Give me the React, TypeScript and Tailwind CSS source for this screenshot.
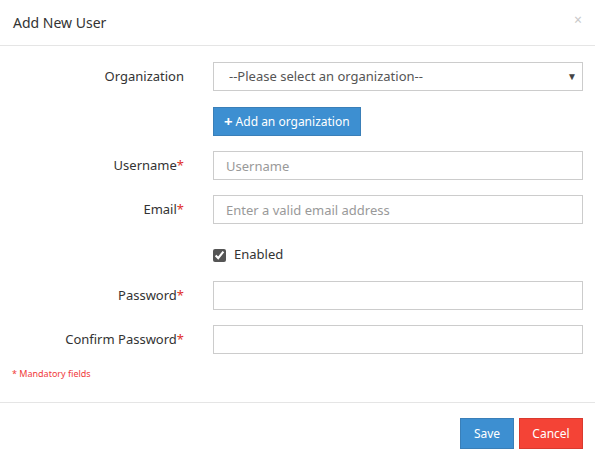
export default function App() {
  const font = { fontFamily: '"Noto Sans", Lato, sans-serif' };
  return (
    <div className="h-[464px] w-[595px] bg-white text-[13px] text-[#333]" style={font}>
      <div className="flex h-[46px] items-center justify-between border-b border-[#e5e5e5] pl-[13px] pr-[13px]">
        <span className="text-[14px] text-[#333]">Add New User</span>
        <span className="-mt-[6px] text-[14px] text-[#c8c8c8]">×</span>
      </div>
      <div className="flex flex-col border-b border-[#e5e5e5] px-[12px] pt-[16px] pb-[22px]">
        <Row label="Organization">
          <div className="flex h-[29px] items-center justify-between border border-[#ccc] pl-[15px] pr-[5px] text-[#555]">
            <span>--Please select an organization--</span>
            <span className="text-[10px] text-[#444]">▼</span>
          </div>
        </Row>
        <div className="mt-[16px] ml-[201px]">
          <button className="flex h-[29px] items-center gap-[3px] border border-[#3a7fb8] bg-[#3d8fd1] px-[10px] text-[12px] text-white">
            <span className="text-[15px] font-bold leading-none">+</span>Add an organization
          </button>
        </div>
        <div className="mt-[15px]">
          <Row label="Username" req>
            <Input ph="Username" />
          </Row>
        </div>
        <div className="mt-[15px]">
          <Row label="Email" req>
            <Input ph="Enter a valid email address" />
          </Row>
        </div>
        <div className="mt-[21px] ml-[201px] flex h-[20px] items-center gap-[8px]">
          <input type="checkbox" defaultChecked className="h-[13px] w-[13px] accent-[#555]" />
          <span>Enabled</span>
        </div>
        <div className="mt-[16px]">
          <Row label="Password" req>
            <Input ph="" />
          </Row>
        </div>
        <div className="mt-[15px]">
          <Row label="Confirm Password" req>
            <Input ph="" />
          </Row>
        </div>
        <div className="mt-[14px] text-[9px] leading-[12px] text-[#f03a3a]">* Mandatory fields</div>
      </div>
      <div className="flex justify-end gap-[5px] pr-[12px] pt-[15px]">
        <button className="h-[31px] w-[54px] border border-[#3a7fb8] bg-[#3d8fd1] text-[12px] text-white">Save</button>
        <button className="h-[31px] w-[64px] border border-[#d93a2f] bg-[#f44336] text-[12px] text-white">Cancel</button>
      </div>
    </div>
  );
}

function Row(props: { label: string; req?: boolean; children: React.ReactNode }) {
  return (
    <div className="flex items-center">
      <div className="w-[172px] shrink-0 text-right">
        {props.label}
        {props.req && <span className="text-[#e0302a]">*</span>}
      </div>
      <div className="ml-[29px] w-[370px]">{props.children}</div>
    </div>
  );
}

function Input(props: { ph: string }) {
  return (
    <input
      placeholder={props.ph}
      className="h-[29px] w-full border border-[#ccc] px-[12px] text-[13px] outline-none placeholder:text-[#999]"
    />
  );
}
